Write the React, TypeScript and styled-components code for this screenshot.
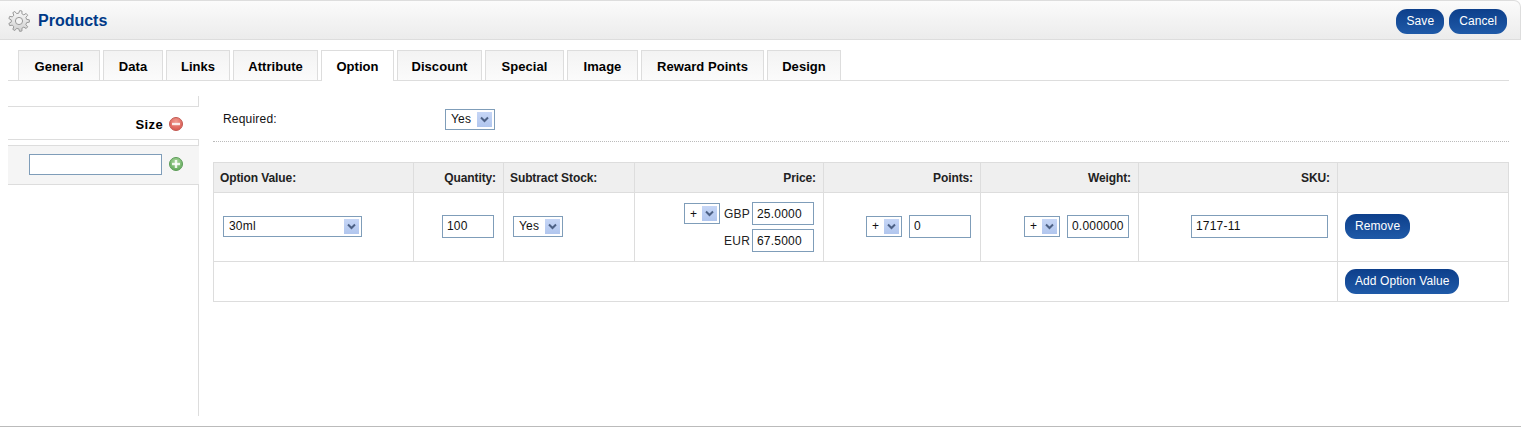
import styled, { createGlobalStyle } from "styled-components";

const TABS = [
  { label: "General", width: 82 },
  { label: "Data", width: 60 },
  { label: "Links", width: 64 },
  { label: "Attribute", width: 85 },
  { label: "Option", width: 73 },
  { label: "Discount", width: 85 },
  { label: "Special", width: 79 },
  { label: "Image", width: 71 },
  { label: "Reward Points", width: 123 },
  { label: "Design", width: 74 },
];
const COLUMNS = [200, 90, 131, 189, 157, 158, 199, 171];

const GlobalStyle = createGlobalStyle`
  html, body { margin: 0; padding: 0; background: #fff; }
  body { font-family: "Liberation Sans", Arial, sans-serif; font-size: 12px; color: #000; }
`;

const Box = styled.div`
  width: 1521px;
  height: 427px;
  box-sizing: border-box;
  border-bottom: 1px solid #bbb;
  overflow: hidden;
`;

const Heading = styled.div`
  height: 40px;
  box-sizing: border-box;
  display: flex;
  align-items: center;
  justify-content: space-between;
  padding: 2px 13px 0 8px;
  border: 1px solid #ddd;
  border-width: 1px 1px 1px 0;
  border-top-right-radius: 7px;
  background: linear-gradient(#fbfbfb, #f3f3f3 50%, #ececec);
`;

const Title = styled.h1`
  margin: 0;
  display: flex;
  align-items: center;
  gap: 8px;
  font-size: 16px;
  font-weight: bold;
  color: #003a88;
`;

const Buttons = styled.div`
  display: flex;
  gap: 5px;
`;

const Button = styled.a`
  display: inline-block;
  height: 25px;
  line-height: 25px;
  padding: 0 10px;
  border-radius: 11px;
  background: linear-gradient(#0d3f8b, #1f5aa8);
  color: #fff;
  font-size: 12px;
  letter-spacing: 0.08px;
  white-space: nowrap;
`;

const Content = styled.div`
  padding: 10px 12px 0 8px;
`;

const TabBar = styled.div`
  height: 31px;
  margin-bottom: 15px;
  padding-left: 10px;
  display: flex;
  gap: 3px;
  box-shadow: inset 0 -1px 0 #ddd;
`;

const Tab = styled.a<{ $active?: boolean; $width: number }>`
  width: ${({ $width }) => $width}px;
  height: 31px;
  box-sizing: border-box;
  padding-top: 8px;
  border: 1px solid #ddd;
  border-bottom: ${({ $active }) => ($active ? "none" : "1px solid #ddd")};
  background: ${({ $active }) => ($active ? "#fff" : "linear-gradient(#f3f3f3, #fbfbfb)")};
  color: #000;
  font-size: 13px;
  font-weight: bold;
  letter-spacing: 0.05px;
  text-align: center;
  white-space: nowrap;
`;

const Columns = styled.div`
  display: flex;
`;

const SideTabs = styled.div`
  width: 191px;
  height: 320px;
  flex: none;
  box-sizing: border-box;
  padding-top: 10px;
  border-right: 1px solid #ddd;
`;

const SideItem = styled.div<{ $muted?: boolean }>`
  display: flex;
  align-items: center;
  justify-content: flex-end;
  gap: ${({ $muted }) => ($muted ? 7 : 6)}px;
  height: ${({ $muted }) => ($muted ? 40 : 34)}px;
  box-sizing: border-box;
  margin-right: -1px;
  margin-bottom: 5px;
  padding: ${({ $muted }) => ($muted ? "0 16px 2px 0" : "2px 16px 0 0")};
  border-top: 1px solid #ddd;
  border-bottom: 1px solid #ddd;
  background: ${({ $muted }) => ($muted ? "#f5f5f5" : "#fff")};
  font-size: 13px;
  font-weight: bold;
  letter-spacing: 0.35px;
`;

const Panel = styled.div`
  flex: 1;
  padding-left: 14px;
`;

const FormRow = styled.div`
  height: 46px;
  box-sizing: border-box;
  display: flex;
  align-items: center;
  margin-bottom: 20px;
  padding: 1px 0 0 10px;
  border-bottom: 1px dotted #bbb;
`;

const FormLabel = styled.span`
  width: 222px;
  letter-spacing: 0.2px;
  color: #111;
`;

const Table = styled.table`
  width: 1296px;
  table-layout: fixed;
  border-collapse: collapse;
`;

const Th = styled.th<{ $left?: boolean }>`
  height: 29px;
  padding: 0 7px 0 ${({ $left }) => ($left ? 6 : 7)}px;
  border: 1px solid #ddd;
  background: #efefef;
  color: #222;
  font-size: 12px;
  font-weight: bold;
  letter-spacing: -0.1px;
  text-align: ${({ $left }) => ($left ? "left" : "right")};
`;

const Td = styled.td<{ $left?: boolean; $tall?: boolean }>`
  height: ${({ $tall }) => ($tall ? 66 : 39)}px;
  padding: 0 9px ${({ $tall }) => ($tall ? 2 : 0)}px;
  border: 1px solid #ddd;
  text-align: ${({ $left }) => ($left ? "left" : "right")};
`;

const ActionCell = styled(Td)`
  padding-left: 7px;
  padding-right: 7px;
`;

const Controls = styled.div`
  display: flex;
  align-items: center;
  justify-content: flex-end;
  gap: 7px;
`;

const PriceRows = styled.div`
  display: grid;
  grid-template-columns: auto auto auto;
  justify-content: end;
  align-items: center;
  row-gap: 4px;
  margin-top: 2px;
`;

const PriceSign = styled.div`
  margin-right: 4px;
`;

const Currency = styled.span`
  margin-right: 2px;
  color: #222;
  text-align: right;
  letter-spacing: 0.2px;
`;

const Field = styled.input<{ $width: number; $height?: number }>`
  display: block;
  width: ${({ $width }) => $width}px;
  height: ${({ $height }) => $height ?? 23}px;
  box-sizing: border-box;
  padding: 1px 4px;
  border: 1px solid #7f9db9;
  border-radius: 0;
  outline: none;
  font: 12px "Liberation Sans", Arial, sans-serif;
  letter-spacing: 0.2px;
  color: #111;
`;

const SelectBox = styled.div<{ $width: number }>`
  width: ${({ $width }) => $width}px;
  height: 21px;
  box-sizing: border-box;
  display: flex;
  align-items: center;
  justify-content: space-between;
  padding: 0 2px 0 5px;
  border: 1px solid #7f9db9;
  background: #fff;
  letter-spacing: 0.2px;
  color: #111;
  text-align: left;
`;

const SelectArrow = styled.span`
  width: 15px;
  height: 15px;
  display: flex;
  align-items: center;
  justify-content: center;
  background: linear-gradient(#c6d6f6, #b1c6ee);
`;

const Select = ({ value, width }: { value: string; width: number }) => (
  <SelectBox $width={width}>
    <span>{value}</span>
    <SelectArrow>
      <svg width="9" height="7" viewBox="0 0 9 7">
        <path d="M1 1.5 L4.5 5 L8 1.5" fill="none" stroke="#4d6185" strokeWidth="2" />
      </svg>
    </SelectArrow>
  </SelectBox>
);

// 9 teeth round a ring, like the old admin theme's setting icon
const gearPath = () => {
  const points: string[] = [];
  const teeth = 9;
  for (let i = 0; i < teeth; i++) {
    const a = (i / teeth) * Math.PI * 2;
    const step = (Math.PI * 2) / teeth;
    const at = (r: number, t: number) => `${(11 + r * Math.cos(t)).toFixed(2)} ${(11 + r * Math.sin(t)).toFixed(2)}`;
    points.push(at(7.8, a - step * 0.3), at(10.4, a - step * 0.16), at(10.4, a + step * 0.16), at(7.8, a + step * 0.3));
  }
  return `M${points.join(" L")} Z`;
};

const GearIcon = () => (
  <svg width="22" height="22" viewBox="0 0 22 22">
    <defs>
      <linearGradient id="gear" x1="0" y1="0" x2="0" y2="1">
        <stop offset="0" stopColor="#fafafa" />
        <stop offset="1" stopColor="#cfcfcf" />
      </linearGradient>
    </defs>
    <path d={gearPath()} fill="url(#gear)" stroke="#999" strokeWidth="1" />
    <circle cx="11" cy="11" r="3.6" fill="#f4f4f4" stroke="#999" strokeWidth="1" />
  </svg>
);

const RoundIcon = ({ kind }: { kind: "add" | "remove" }) => {
  const [light, dark, edge] = kind === "add" ? ["#a8d49c", "#5fa858", "#5c9c58"] : ["#f09a90", "#d9534a", "#c05a52"];
  return (
    <svg width="14" height="14" viewBox="0 0 14 14">
      <defs>
        <radialGradient id={kind} cx="0.5" cy="0.3" r="0.75">
          <stop offset="0" stopColor={light} />
          <stop offset="1" stopColor={dark} />
        </radialGradient>
      </defs>
      <circle cx="7" cy="7" r="6.5" fill={`url(#${kind})`} stroke={edge} />
      <rect x="3" y="5.8" width="8" height="2.4" fill="#fff" opacity="0.85" />
      {kind === "add" && <rect x="5.8" y="3" width="2.4" height="8" fill="#fff" opacity="0.85" />}
    </svg>
  );
};

export default function App() {
  return (
    <>
      <GlobalStyle />
      <Box>
        <Heading>
          <Title>
            <GearIcon />
            Products
          </Title>
          <Buttons>
            <Button>Save</Button>
            <Button>Cancel</Button>
          </Buttons>
        </Heading>
        <Content>
          <TabBar>
            {TABS.map((tab) => (
              <Tab key={tab.label} $width={tab.width} $active={tab.label === "Option"}>
                {tab.label}
              </Tab>
            ))}
          </TabBar>
          <Columns>
            <SideTabs>
              <SideItem>
                Size
                <RoundIcon kind="remove" />
              </SideItem>
              <SideItem $muted>
                <Field $width={133} $height={21} readOnly />
                <RoundIcon kind="add" />
              </SideItem>
            </SideTabs>
            <Panel>
              <FormRow>
                <FormLabel>Required:</FormLabel>
                <Select value="Yes" width={50} />
              </FormRow>
              <Table>
                <colgroup>
                  {COLUMNS.map((width, i) => (
                    <col key={i} width={width} />
                  ))}
                </colgroup>
                <thead>
                  <tr>
                    <Th $left>Option Value:</Th>
                    <Th>Quantity:</Th>
                    <Th $left>Subtract Stock:</Th>
                    <Th>Price:</Th>
                    <Th>Points:</Th>
                    <Th>Weight:</Th>
                    <Th>SKU:</Th>
                    <Th />
                  </tr>
                </thead>
                <tbody>
                  <tr>
                    <Td $left $tall>
                      <Select value="30ml" width={139} />
                    </Td>
                    <Td $tall>
                      <Controls>
                        <Field $width={52} defaultValue="100" />
                      </Controls>
                    </Td>
                    <Td $left $tall>
                      <Select value="Yes" width={50} />
                    </Td>
                    <Td $tall>
                      <PriceRows>
                        <PriceSign>
                          <Select value="+" width={36} />
                        </PriceSign>
                        <Currency>GBP</Currency>
                        <Field $width={62} defaultValue="25.0000" />
                        <span />
                        <Currency>EUR</Currency>
                        <Field $width={62} defaultValue="67.5000" />
                      </PriceRows>
                    </Td>
                    <Td $tall>
                      <Controls>
                        <Select value="+" width={36} />
                        <Field $width={62} defaultValue="0" />
                      </Controls>
                    </Td>
                    <Td $tall>
                      <Controls>
                        <Select value="+" width={36} />
                        <Field $width={62} defaultValue="0.000000" />
                      </Controls>
                    </Td>
                    <Td $tall>
                      <Controls>
                        <Field $width={137} defaultValue="1717-11" />
                      </Controls>
                    </Td>
                    <ActionCell $left $tall>
                      <Button>Remove</Button>
                    </ActionCell>
                  </tr>
                  <tr>
                    <Td colSpan={7} />
                    <ActionCell $left>
                      <Button>Add Option Value</Button>
                    </ActionCell>
                  </tr>
                </tbody>
              </Table>
            </Panel>
          </Columns>
        </Content>
      </Box>
    </>
  );
}
